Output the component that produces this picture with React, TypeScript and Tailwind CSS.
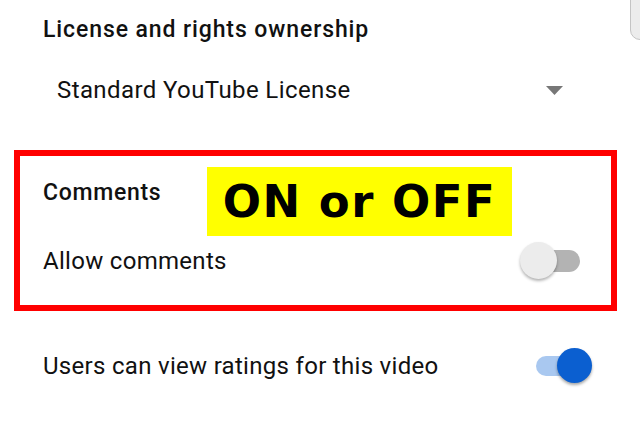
import React from 'react';

function Toggle({ on }: { on: boolean }) {
  if (on) {
    return (
      <div className="relative w-[58px] h-[36px] flex items-center">
        <div className="ml-[2px] w-[40px] h-[20px] rounded-full bg-[#a9c8f0]" />
        <div className="absolute right-0 top-0 w-[35px] h-[35px] rounded-full bg-[#0b5fd0] shadow-[0_2px_3px_rgba(0,0,0,0.35)]" />
      </div>
    );
  }
  return (
    <div className="relative w-[60px] h-[38px] flex items-center">
      <div className="ml-[18px] w-[42px] h-[22px] rounded-full bg-[#b3b3b3]" />
      <div className="absolute left-0 top-0 w-[37px] h-[37px] rounded-full bg-[#ececec] shadow-[0_2px_3px_rgba(0,0,0,0.3)]" />
    </div>
  );
}

export default function App() {
  return (
    <div
      className="relative w-[640px] h-[444px] bg-white overflow-hidden text-[#111]"
      style={{ fontFamily: 'Roboto, "Liberation Sans", sans-serif' }}
    >
      {/* scroll edge */}
      <div className="absolute right-[-8px] top-[-8px] w-[18px] h-[48px] rounded-bl-[10px] bg-[#ececec] border border-[#c4c4c4]" />

      {/* License */}
      <div className="pl-[43px] pt-[16px]">
        <div className="text-[23px] font-medium leading-[28px] tracking-[0.9px]">License and rights ownership</div>
      </div>
      <div className="flex items-center justify-between pl-[57px] pr-[77px] mt-[31px] h-[30px]">
        <span className="text-[24px] leading-[30px] tracking-[0.4px]">Standard YouTube License</span>
        <svg width="17" height="9" viewBox="0 0 17 9">
          <path d="M0 0 L17 0 L8.5 9 Z" fill="#777" />
        </svg>
      </div>

      {/* Comments box */}
      <div className="relative mt-[45px] ml-[14px] w-[603px] h-[161px] border-[6px] border-[#ff0000]">
        <div className="pl-[23px] pt-[23px] text-[23px] font-medium leading-[28px] tracking-[0.7px]">Comments</div>
        <div className="flex items-center justify-between pl-[23px] pr-[31px] mt-[35px]">
          <span className="text-[24px] leading-[30px] tracking-[0.3px]">Allow comments</span>
          <Toggle on={false} />
        </div>
        <div className="absolute left-[187px] top-[11px] w-[305px] h-[69px] bg-[#ffff00] flex items-center justify-center">
          <span
            className="text-[45px] font-bold leading-none tracking-[1.5px] text-black"
            style={{ fontFamily: '"DejaVu Sans", sans-serif' }}
          >
            ON or OFF
          </span>
        </div>
      </div>

      {/* Ratings */}
      <div className="flex items-center justify-between pl-[43px] pr-[48px] mt-[37px]">
        <span className="text-[24px] leading-[30px] tracking-[0.3px]">Users can view ratings for this video</span>
        <Toggle on={true} />
      </div>
    </div>
  );
}
